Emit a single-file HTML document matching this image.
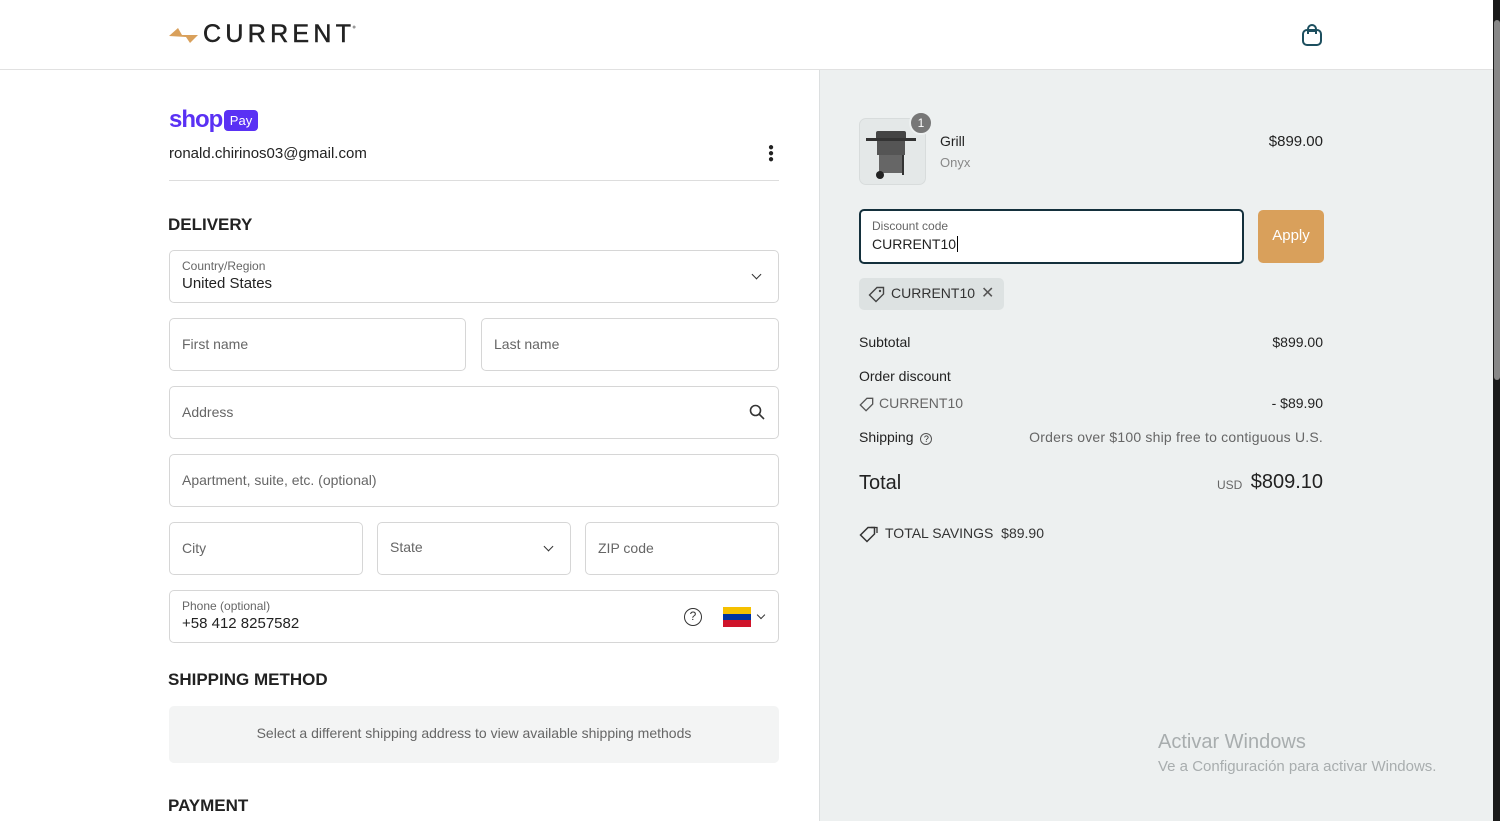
<!DOCTYPE html>
<html><head><meta charset="utf-8"><style>
*{box-sizing:border-box;margin:0;padding:0}
body{width:1500px;height:821px;overflow:hidden;font-family:"Liberation Sans",sans-serif;color:#222;background:#fff;position:relative}
.hdr{position:absolute;left:0;top:0;width:1493px;height:70px;border-bottom:1px solid #e1e1e1;background:#fff}
.right{position:absolute;left:819px;top:70px;width:674px;height:751px;background:#edf0f0;border-left:1px solid #dcdfe0}
.sb{position:absolute;left:1493px;top:0;width:7px;height:821px;background:#1a1a1a}
.sb i{position:absolute;left:1px;top:20px;width:6px;height:360px;background:#888;border-radius:3px}
.t{position:absolute;white-space:nowrap}
.r{position:absolute;white-space:nowrap;right:177px;text-align:right}
.box{position:absolute;border:1px solid #d6d6d6;border-radius:5px;background:#fff}
.ph{position:absolute;left:12px;top:17px;font-size:14px;color:#666}
.lbl{position:absolute;left:12px;top:8px;font-size:12px;color:#666}
.val{position:absolute;left:12px;top:24px;font-size:15px;color:#222}
.h{font-size:17px;font-weight:bold;color:#222}
.chev{position:absolute;width:7px;height:7px;border-right:1.5px solid #333;border-bottom:1.5px solid #333;transform:rotate(45deg)}
</style></head><body>
<div class="hdr">
 <svg class="t" style="left:168px;top:26px" width="32" height="18" viewBox="0 0 32 18"><path d="M1 10 L10 2 L14 9 L30 9 L22 17 L18 11 Z" fill="#d9a05b"/></svg>
 <div class="t" style="left:203px;top:20px;font-size:25px;letter-spacing:4.3px;color:#222;-webkit-text-stroke:0.5px #222">CURRENT</div>
 <div class="t" style="left:352px;top:24px;font-size:7px;color:#999">●</div>
 <svg class="t" style="left:1301px;top:23px" width="22" height="24" viewBox="0 0 22 24"><rect x="2" y="7" width="18" height="15" rx="4" fill="none" stroke="#1d4f5f" stroke-width="2"/><path d="M7 11 V6 a4 4 0 0 1 8 0 V11" fill="none" stroke="#1d4f5f" stroke-width="2"/><path d="M7 8 H15" stroke="#1d4f5f" stroke-width="2"/></svg>
</div>
<div class="t" style="left:169px;top:106px;font-size:24px;font-weight:bold;color:#5a31f4;letter-spacing:-1px">shop</div>
<div class="t" style="left:224px;top:110px;width:34px;height:21px;background:#5a31f4;border-radius:4px;color:#fff;font-size:13px;text-align:center;line-height:21px">Pay</div>
<div class="t" style="left:169px;top:145px;font-size:15px">ronald.chirinos03@gmail.com</div>
<div class="t" style="left:768px;top:145px;width:4px;line-height:6px;font-size:10px">●<br>●<br>●</div>
<div class="t" style="left:169px;top:180px;width:610px;border-top:1px solid #ddd"></div>
<div class="t h" style="left:168px;top:215px">DELIVERY</div>
<div class="box" style="left:169px;top:250px;width:610px;height:53px"><div class="lbl">Country/Region</div><div class="val">United States</div><div class="chev" style="right:18px;top:20px"></div></div>
<div class="box" style="left:169px;top:318px;width:297px;height:53px"><div class="ph">First name</div></div>
<div class="box" style="left:481px;top:318px;width:298px;height:53px"><div class="ph">Last name</div></div>
<div class="box" style="left:169px;top:386px;width:610px;height:53px"><div class="ph">Address</div>
<svg style="position:absolute;right:13px;top:17px" width="16" height="16" viewBox="0 0 16 16"><circle cx="6.5" cy="6.5" r="5" fill="none" stroke="#333" stroke-width="1.6"/><path d="M10 10 L15 15" stroke="#333" stroke-width="1.6"/></svg></div>
<div class="box" style="left:169px;top:454px;width:610px;height:53px"><div class="ph">Apartment, suite, etc. (optional)</div></div>
<div class="box" style="left:169px;top:522px;width:194px;height:53px"><div class="ph">City</div></div>
<div class="box" style="left:377px;top:522px;width:194px;height:53px"><div class="ph" style="top:16px">State</div><div class="chev" style="right:18px;top:20px"></div></div>
<div class="box" style="left:585px;top:522px;width:194px;height:53px"><div class="ph">ZIP code</div></div>
<div class="box" style="left:169px;top:590px;width:610px;height:53px"><div class="lbl">Phone (optional)</div><div class="val">+58 412 8257582</div>
<div style="position:absolute;left:514px;top:17px;width:18px;height:18px;border:1.5px solid #333;border-radius:50%;font-size:12px;text-align:center;line-height:15px;color:#333">?</div>
<div style="position:absolute;left:553px;top:16px;width:28px;height:20px"><div style="height:7px;background:#f5c000"></div><div style="height:6px;background:#0033a0"></div><div style="height:7px;background:#cf142b"></div></div>
<div class="chev" style="right:14px;top:21px;width:6px;height:6px"></div></div>
<div class="t h" style="left:168px;top:670px">SHIPPING METHOD</div>
<div class="t" style="left:169px;top:706px;width:610px;height:57px;background:#f3f4f4;border-radius:5px;font-size:14px;color:#666;text-align:center;line-height:55px">Select a different shipping address to view available shipping methods</div>
<div class="t h" style="left:168px;top:796px">PAYMENT</div>

<div class="right"></div>
<div class="t" style="left:859px;top:118px;width:67px;height:67px;background:#e4e8e8;border:1px solid #d8dcdc;border-radius:7px">
 <svg width="67" height="67" viewBox="0 0 67 67"><rect x="16" y="12" width="30" height="10" rx="2" fill="#444"/><rect x="6" y="19" width="50" height="3" fill="#333"/><rect x="17" y="22" width="28" height="14" fill="#555"/><rect x="19" y="36" width="24" height="18" fill="#666"/><circle cx="20" cy="56" r="4" fill="#222"/><rect x="42" y="36" width="2" height="20" fill="#333"/></svg>
</div>
<div class="t" style="left:909px;top:111px;width:24px;height:24px;border-radius:50%;background:#777;border:2px solid #edf0f0;color:#fff;font-size:12px;text-align:center;line-height:20px">1</div>
<div class="t" style="left:940px;top:133px;font-size:14px">Grill</div>
<div class="t" style="left:940px;top:155px;font-size:13px;color:#888">Onyx</div>
<div class="r" style="top:133px;font-size:15px">$899.00</div>
<div class="t" style="left:859px;top:209px;width:385px;height:55px;border:2px solid #14303c;border-radius:5px;background:#fff"><div class="lbl" style="left:11px;top:8px">Discount code</div><div class="val" style="left:11px;top:25px;font-size:14px">CURRENT10<span style="border-left:1px solid #000;margin-left:1px"></span></div></div>
<div class="t" style="left:1258px;top:210px;width:66px;height:53px;background:#d9a05b;border-radius:5px;color:#fff;font-size:15px;text-align:center;line-height:52px">Apply</div>
<div class="t" style="left:859px;top:278px;width:145px;height:32px;background:#dde2e2;border-radius:5px">
 <svg style="position:absolute;left:9px;top:8px" width="17" height="17" viewBox="0 0 17 17"><path d="M9 1.5 H15.5 V8 L8 15.5 L1.5 9 Z" fill="none" stroke="#444" stroke-width="1.4"/><circle cx="12" cy="5" r="1.2" fill="#444"/></svg>
 <span style="position:absolute;left:32px;top:7px;font-size:14px;color:#333">CURRENT10</span>
 <span style="position:absolute;left:122px;top:5px;font-size:16px;color:#555">✕</span></div>
<div class="t" style="left:859px;top:334px;font-size:14px">Subtotal</div>
<div class="r" style="top:334px;font-size:14px">$899.00</div>
<div class="t" style="left:859px;top:368px;font-size:14px">Order discount</div>
<svg class="t" style="left:859px;top:397px" width="15" height="15" viewBox="0 0 17 17"><path d="M9 1.5 H15.5 V8 L8 15.5 L1.5 9 Z" fill="none" stroke="#555" stroke-width="1.5"/></svg>
<div class="t" style="left:879px;top:395px;font-size:14px;color:#666">CURRENT10</div>
<div class="r" style="top:395px;font-size:14px">- $89.90</div>
<div class="t" style="left:859px;top:429px;font-size:14px">Shipping <span style="display:inline-block;width:12px;height:12px;border:1px solid #555;border-radius:50%;font-size:9px;text-align:center;line-height:11px;margin-left:3px">?</span></div>
<div class="r" style="top:429px;font-size:14px;color:#666;letter-spacing:0.2px">Orders over $100 ship free to contiguous U.S.</div>
<div class="t" style="left:859px;top:472px;font-size:20px">Total</div>
<div class="t" style="left:1217px;top:478px;font-size:12px;color:#666">USD</div>
<div class="r" style="top:471px;font-size:20px">$809.10</div>
<svg class="t" style="left:859px;top:526px" width="19" height="17" viewBox="0 0 19 17"><path d="M9 1.5 H15.5 V8 L8 15.5 L1.5 9 Z" fill="none" stroke="#333" stroke-width="1.5"/><path d="M12 1.5 H18 V7" fill="none" stroke="#333" stroke-width="1.3"/></svg>
<div class="t" style="left:885px;top:525px;font-size:14px;color:#333">TOTAL SAVINGS &nbsp;$89.90</div>
<div class="t" style="left:1158px;top:731px;font-size:20px;color:#a8adae">Activar Windows</div>
<div class="t" style="left:1158px;top:758px;font-size:15px;color:#a8adae">Ve a Configuración para activar Windows.</div>
<div class="sb"><i></i></div>
</body></html>
